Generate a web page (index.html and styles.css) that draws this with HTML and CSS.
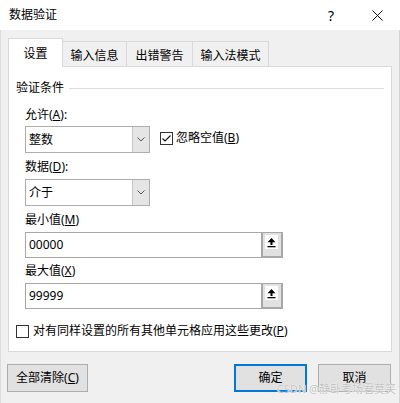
FILE: index.html
```html
<!DOCTYPE html>
<html lang="zh-CN">
<head>
<meta charset="utf-8">
<title>数据验证</title>
<link rel="stylesheet" href="styles.css">
</head>
<body>
<div class="window">
  <div class="titlebar">
    <span class="title">数据验证</span>
    <span class="cap help">?</span>
    <span class="cap close">
      <svg width="11" height="11" viewBox="0 0 11 11"><path d="M0.5 0.5 L10.5 10.5 M10.5 0.5 L0.5 10.5" stroke="#111" stroke-width="1" fill="none"/></svg>
    </span>
  </div>
  <div class="body">
    <div class="tabs">
      <div class="tab active t1">设置</div>
      <div class="tab t2">输入信息</div>
      <div class="tab t3">出错警告</div>
      <div class="tab t4">输入法模式</div>
    </div>
    <div class="panel">
      <div class="group-title"><span>验证条件</span><span class="rule"></span></div>
      <div class="group">
        <div class="label l-allow">允许(<u>A</u>):</div>
        <div class="row">
          <div class="combo">
            <span class="combo-text">整数</span>
            <span class="combo-btn"><svg width="8" height="5" viewBox="0 0 8 5"><path d="M0.5 0.5 L4 4 L7.5 0.5" stroke="#555" stroke-width="1" fill="none"/></svg></span>
          </div>
          <div class="check check-ignore">
            <span class="box"><svg width="13" height="13" viewBox="0 0 13 13"><path d="M2.5 6.5 L5 9 L10.5 3.5" stroke="#111" stroke-width="1.1" fill="none"/></svg></span>
            <span class="check-text">忽略空值(<u>B</u>)</span>
          </div>
        </div>
        <div class="label l-data">数据(<u>D</u>):</div>
        <div class="combo c2">
          <span class="combo-text">介于</span>
          <span class="combo-btn"><svg width="8" height="5" viewBox="0 0 8 5"><path d="M0.5 0.5 L4 4 L7.5 0.5" stroke="#555" stroke-width="1" fill="none"/></svg></span>
        </div>
        <div class="label l-min">最小值(<u>M</u>)</div>
        <div class="input">
          <span class="input-text">00000</span>
          <span class="ref-btn"><span class="ref-inner"><svg width="11" height="11" viewBox="0 0 11 11"><path d="M5.5 1 L9.5 5.2 L1.5 5.2 Z" fill="#000"/><rect x="4.5" y="5" width="2" height="3" fill="#000"/><rect x="1.5" y="9" width="8" height="1.3" fill="#000"/></svg></span></span>
        </div>
        <div class="label l-max">最大值(<u>X</u>)</div>
        <div class="input">
          <span class="input-text">99999</span>
          <span class="ref-btn"><span class="ref-inner"><svg width="11" height="11" viewBox="0 0 11 11"><path d="M5.5 1 L9.5 5.2 L1.5 5.2 Z" fill="#000"/><rect x="4.5" y="5" width="2" height="3" fill="#000"/><rect x="1.5" y="9" width="8" height="1.3" fill="#000"/></svg></span></span>
        </div>
      </div>
      <div class="check check-apply">
        <span class="box"></span>
        <span class="check-text">对有同样设置的所有其他单元格应用这些更改(<u>P</u>)</span>
      </div>
    </div>
    <div class="buttons">
      <div class="btn btn-clear">全部清除(<u>C</u>)</div>
      <div class="spacer"></div>
      <div class="btn btn-ok">确定</div>
      <div class="btn btn-cancel">取消</div>
    </div>
  </div>
  <div class="watermark">CSDN @静卧考场君莫笑</div>
</div>
</body>
</html>
```

FILE: styles.css
```css
* { box-sizing: border-box; }
html, body { margin: 0; padding: 0; }
body {
  font-family: "Noto Sans", "Noto Sans CJK SC", sans-serif;
  font-size: 12px;
  color: #000;
  background: #f0f0f0;
}
u { text-decoration: underline; text-underline-offset: 1px; }
.window {
  position: relative;
  width: 400px;
  height: 403px;
  background: #f0f0f0;
  overflow: hidden;
  box-shadow: inset -1px 0 #d4d4d4, inset 1px 0 #dcdcdc;
}
.titlebar {
  height: 30px;
  background: #fff;
  display: flex;
  align-items: center;
  padding-left: 9px;
}
.title { flex: 1; line-height: 16px; }
.cap {
  width: 46px;
  height: 30px;
  display: flex;
  align-items: center;
  justify-content: center;
}
.help { font-size: 14px; }
.body { padding: 8px 8px 0 8px; }
.tabs {
  display: flex;
  align-items: flex-end;
  height: 28px;
}
.tab {
  height: 25px;
  border: 1px solid #d9d9d9;
  border-bottom: none;
  background: #f0f0f0;
  display: flex;
  align-items: center;
  justify-content: center;
  padding-top: 2px;
  margin-left: -1px;
}
.tab.active {
  height: 29px;
  margin-bottom: -1px;
  margin-left: 0;
  background: #fff;
  position: relative;
  z-index: 1;
  padding-top: 0;
}
.t1 { width: 55px; }
.t2 { width: 65px; }
.t3 { width: 67px; }
.t4 { width: 77px; }
.panel {
  height: 286px;
  border: 1px solid #d9d9d9;
  background: #fff;
  padding: 0 7px 0 7px;
}
.group-title {
  display: flex;
  align-items: center;
  margin-top: 13px;
  line-height: 16px;
}
.rule {
  flex: 1;
  height: 1px;
  background: #dcdcdc;
  margin-left: 5px;
  margin-top: 1px;
}
.group { padding-left: 9px; }
.label { line-height: 16px; }
.l-allow { margin-top: 11px; }
.l-data { margin-top: 6px; }
.l-min { margin-top: 6px; }
.l-max { margin-top: 5px; }
.row {
  display: flex;
  align-items: flex-start;
  margin-top: 3px;
}
.combo {
  width: 125px;
  height: 27px;
  border: 1px solid #adadad;
  background: #fff;
  display: flex;
}
.c2 { margin-top: 4px; }
.combo-text {
  flex: 1;
  padding-left: 3px;
  line-height: 25px;
}
.combo-btn {
  width: 17px;
  background: #e5e5e5;
  border-left: 1px solid #c4c4c4;
  display: flex;
  align-items: center;
  justify-content: center;
}
.check {
  display: flex;
  align-items: center;
}
.check-ignore { margin-left: 10px; margin-top: 4px; }
.box {
  width: 13px;
  height: 13px;
  border: 1px solid #333;
  background: #fff;
  display: flex;
  align-items: center;
  justify-content: center;
}
.box svg { margin: -1px; }
.check-text { margin-left: 3px; line-height: 16px; }
.check-apply { margin-top: 14px; }
.check-apply .check-text { margin-left: 4px; }
.input {
  width: 258px;
  height: 26px;
  margin-top: 4px;
  border: 1px solid #a8a8a8;
  background: #fff;
  display: flex;
}
.input-text {
  flex: 1;
  padding-left: 3px;
  line-height: 24px;
}
.ref-btn {
  width: 21px;
  background: #e1e1e1;
  border-left: 2px solid #a8a8a8;
  border-right: 1px solid #a8a8a8;
  border-bottom: 1px solid #a8a8a8;
  padding: 2px 0 0 2px;
}
.ref-inner {
  display: flex;
  width: 13px;
  height: 14px;
  background: #fff;
  align-items: center;
  justify-content: center;
}
.buttons {
  display: flex;
  margin-top: 12px;
}
.btn {
  height: 28px;
  border: 1px solid #adadad;
  background: #e1e1e1;
  display: flex;
  align-items: center;
  justify-content: center;
  line-height: 16px;
}
.btn-clear { width: 81px; margin-left: -1px; }
.spacer { flex: 1; }
.btn-ok { width: 73px; border: 2px solid #0078d7; }
.btn-cancel { width: 73px; margin-left: 11px; margin-right: 1px; }
.watermark {
  position: absolute;
  right: 4px;
  top: 382px;
  font-size: 11px;
  line-height: 14px;
  color: #c2c2c2;
  text-shadow: 0 0 1px #fff, 0 0 1px #fff;
  white-space: nowrap;
}
```
